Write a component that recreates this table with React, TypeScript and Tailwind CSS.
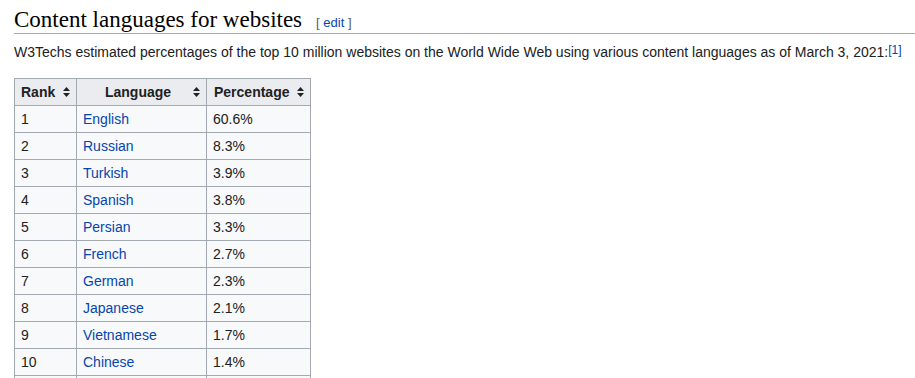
import React from "react";

const rows: [string, string, string][] = [
  ["1", "English", "60.6%"],
  ["2", "Russian", "8.3%"],
  ["3", "Turkish", "3.9%"],
  ["4", "Spanish", "3.8%"],
  ["5", "Persian", "3.3%"],
  ["6", "French", "2.7%"],
  ["7", "German", "2.3%"],
  ["8", "Japanese", "2.1%"],
  ["9", "Vietnamese", "1.7%"],
  ["10", "Chinese", "1.4%"],
];

function SortIcon() {
  return (
    <svg width="7" height="10" viewBox="0 0 7 10" className="inline-block">
      <path d="M3.5 0 L7 4 L0 4 Z M3.5 10 L7 6 L0 6 Z" fill="#202122" />
    </svg>
  );
}

export default function App() {
  return (
    <div
      className="w-[915px] h-[378px] overflow-hidden bg-white text-[#202122]"
      style={{ fontFamily: '"Liberation Sans", Arial, sans-serif' }}
    >
      <div className="pl-[14px] pt-[6px]">
        <div className="flex items-baseline border-b border-[#a2a9b1] h-[28px]">
          <h2
            className="text-[23px] leading-[28px] text-black"
            style={{ fontFamily: '"Liberation Serif", "Times New Roman", serif' }}
          >
            Content languages for websites
          </h2>
          <span className="ml-[14px] text-[13px] text-[#54595d]">
            [ <span className="text-[#0645ad]">edit</span> ]
          </span>
        </div>
        <p className="text-[14px] leading-[22px] mt-[7px]">
          W3Techs estimated percentages of the top 10 million websites on the World Wide Web using various content languages as of March 3, 2021:
          <sup className="text-[12px] text-[#0645ad] relative top-[-3px]">[1]</sup>
        </p>
        <table className="mt-[15px] border-collapse text-[14px] bg-[#f8f9fa] border border-[#a2a9b1]">
          <thead>
            <tr className="h-[27px] bg-[#eaecf0]">
              <th className="w-[62px] border border-[#a2a9b1] pl-[6px] pr-[6px] font-bold text-left">
                <div className="flex items-center justify-between">
                  <span>Rank</span>
                  <SortIcon />
                </div>
              </th>
              <th className="w-[130px] border border-[#a2a9b1] pl-[6px] pr-[6px] font-bold">
                <div className="flex items-center justify-between">
                  <span className="flex-1 text-center">Language</span>
                  <SortIcon />
                </div>
              </th>
              <th className="w-[104px] border border-[#a2a9b1] pl-[7px] pr-[6px] font-bold">
                <div className="flex items-center justify-between">
                  <span>Percentage</span>
                  <SortIcon />
                </div>
              </th>
            </tr>
          </thead>
          <tbody>
            {rows.map(([r, l, p]) => (
              <tr key={r} className="h-[27px]">
                <td className="border border-[#a2a9b1] px-[6px]">{r}</td>
                <td className="border border-[#a2a9b1] px-[6px] text-[#0645ad]">{l}</td>
                <td className="border border-[#a2a9b1] px-[6px]">{p}</td>
              </tr>
            ))}
            <tr className="h-[27px]">
              <td className="border border-[#a2a9b1] px-[6px]"></td>
              <td className="border border-[#a2a9b1] px-[6px]"></td>
              <td className="border border-[#a2a9b1] px-[6px]"></td>
            </tr>
          </tbody>
        </table>
      </div>
    </div>
  );
}
